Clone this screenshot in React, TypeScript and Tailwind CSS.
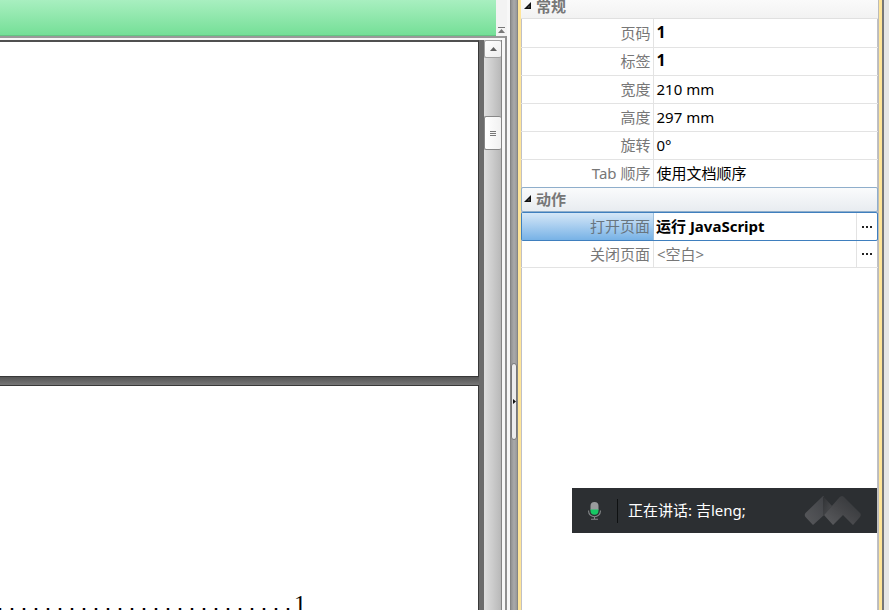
import { useState } from "react";

const latin = "font-['Noto_Sans','Noto_Sans_CJK_SC',sans-serif]";

type Property = { name: string; value: string; bold?: boolean };

const general: Property[] = [
  { name: "页码", value: "1", bold: true },
  { name: "标签", value: "1", bold: true },
  { name: "宽度", value: "210 mm" },
  { name: "高度", value: "297 mm" },
  { name: "旋转", value: "0°" },
  { name: "Tab 顺序", value: "使用文档顺序" },
];

function Expander() {
  return (
    <svg className="h-[7px] w-[7px] shrink-0" viewBox="0 0 7 7" aria-hidden="true">
      <path d="M7 0V7H0Z" fill="#111" />
      <path d="M5.5 3.5V5.5H3.5Z" fill="#666" />
    </svg>
  );
}

function Dots() {
  return (
    <svg className="h-[2px] w-[10px]" viewBox="0 0 10 2" aria-hidden="true">
      <path d="M0 0h2v2h-2zM4 0h2v2h-2zM8 0h2v2h-2z" fill="#222" />
    </svg>
  );
}

function GeneralTable() {
  return (
    <table className="w-full table-fixed border-collapse">
      <tbody>
        {general.map((item) => (
          <tr key={item.name} className="h-7 border-b border-[#e3e3e3] last:border-b-0">
            <th scope="row" className="w-[132px] border-r border-[#e3e3e3] p-0 pr-0.5 text-right font-normal text-[#777]">
              {item.name}
            </th>
            <td className={item.bold ? "p-0 pb-0.5 pl-[3px] text-base leading-5 font-bold" : "p-0 pl-[3px]"}>{item.value}</td>
          </tr>
        ))}
      </tbody>
    </table>
  );
}

function Actions() {
  return (
    <div>
      <div className="flex h-[29px] rounded-xs border border-[#3f7fbe]">
        <div className="flex w-[132px] shrink-0 items-center justify-end border-r border-[#9dbfdc] bg-linear-to-b from-[#d5e7f7] to-[#77b2e6] pr-[3px] pb-0.5 text-[#68757f]">
          打开页面
        </div>
        <div className="flex min-w-0 flex-1 items-center pb-0.5 pl-0.5 font-bold">运行 JavaScript</div>
        <button type="button" aria-label="编辑打开页面" className="flex w-[21px] items-center justify-center border-l border-[#e3e3e3]">
          <Dots />
        </button>
      </div>
      <div className="flex h-[27px] border-b border-[#e3e3e3] text-[#777]">
        <div className="flex w-[133px] shrink-0 items-center justify-end border-r border-[#e3e3e3] pr-[3px]">关闭页面</div>
        <div className="flex min-w-0 flex-1 items-center pl-[3px]">&lt;空白&gt;</div>
        <button type="button" aria-label="编辑关闭页面" className="flex w-[22px] items-center justify-center border-l border-[#e3e3e3] pr-0.5">
          <Dots />
        </button>
      </div>
    </div>
  );
}

function PropertyPanel() {
  const [showGeneral, setShowGeneral] = useState(true);
  const [showActions, setShowActions] = useState(true);
  return (
    <aside className={`${latin} w-[357px] shrink-0 bg-white text-[15px] leading-5 text-black shadow-[inset_1px_0_#c0c0c4,inset_-1px_0_#c0c0c4]`}>
      <button
        type="button"
        aria-expanded={showGeneral}
        onClick={() => setShowGeneral(!showGeneral)}
        className="flex h-[19px] w-full items-end gap-[5px] border-b border-[#e0e0e0] bg-linear-to-b from-[#fafafa] to-[#f2f2f2] pl-[3px] font-bold text-[#777]"
      >
        <span className="flex h-4 items-start">
          <Expander />
        </span>
        <span className="pb-0.5">常规</span>
      </button>
      {showGeneral && <GeneralTable />}
      <button
        type="button"
        aria-expanded={showActions}
        onClick={() => setShowActions(!showActions)}
        className="flex h-[25px] w-full items-center gap-[5px] rounded-xs border border-[#8faecb] bg-linear-to-b from-[#fafbfc] to-[#e8ecf0] pb-0.5 pl-0.5 font-bold text-[#777]"
      >
        <Expander />
        动作
      </button>
      {showActions && <Actions />}
    </aside>
  );
}

function Scrollbar() {
  return (
    <div className="flex w-[18px] shrink-0 flex-col border-r border-[#858585] bg-linear-to-r from-[#dedede] via-[#cccccc] to-[#b8b8b8]">
      <button type="button" aria-label="向上滚动" className="flex h-[18px] items-center justify-center rounded-xs border border-r-0 border-[#a0a0a0] bg-linear-to-br from-white to-[#ededed]">
        <svg className="h-1 w-[7px]" viewBox="0 0 7 4" aria-hidden="true"><path d="M3.5 0L7 4H0Z" fill="#606060" /></svg>
      </button>
      <div className="h-[58px]" />
      <button type="button" aria-label="滚动滑块" className="flex h-[34px] items-center justify-center rounded-xs border border-r-0 border-[#888] bg-linear-to-r from-white to-[#f1f1f1]">
        <svg className="h-[5px] w-1.5" viewBox="0 0 6 5" aria-hidden="true"><path d="M0 .5H6M0 2.5H6M0 4.5H6" stroke="#777" strokeWidth="1" /></svg>
      </button>
    </div>
  );
}

function DocumentView() {
  return (
    <main className="flex min-w-0 flex-1 flex-col border-r-2 border-[#909090]">
      <div className="flex h-9 shrink-0">
        <div className="flex-1 border-b border-[#64c483] bg-linear-to-b from-[#a8efc0] to-[#74df97]" />
        <button type="button" aria-label="收起工具栏" className="-mr-0.5 flex w-[11px] items-end justify-center bg-[#f3f3f3] pb-[3px]">
          <svg className="h-1.5 w-[7px]" viewBox="0 0 7 6" aria-hidden="true"><path d="M0 0H7V1H0ZM3.5 2L7 6H0Z" fill="#777" /></svg>
        </button>
      </div>
      <div className="h-1 shrink-0 border-t-2 border-[#999] bg-[#f8f8f8]" />
      <div className="flex min-h-0 flex-1 bg-[#f8f8f8] pr-[3px]">
        <div className="flex min-w-0 flex-1 flex-col overflow-hidden bg-[#6b6b6b] pr-[5px]">
          <section className="h-[337px] shrink-0 border-t-2 border-r border-b border-[#383838] border-t-[#505050] bg-white" />
          <div className="h-2 shrink-0 bg-linear-to-b from-[#555] to-[#777]" />
          <section className="flex-1 overflow-hidden border-t border-r border-[#383838] bg-white pt-[203px]">
            <p className="-ml-1.5 flex items-baseline leading-7 text-black">
              <span className="font-['Liberation_Mono',monospace] text-[20px]">.........................</span>
              <span className="font-['Liberation_Serif',serif] text-[24px]">1</span>
            </p>
          </section>
        </div>
        <Scrollbar />
      </div>
    </main>
  );
}

function Speaking() {
  return (
    <div role="status" className="absolute right-3 bottom-[77px] flex h-[45px] w-[305px] items-center bg-[#2c2f32] font-['Noto_Sans','Noto_Sans_CJK_SC',sans-serif] text-[15px] text-white">
      <svg className="ml-4 h-[18px] w-[13px]" viewBox="0 0 13 18" aria-hidden="true">
        <path d="M2.5 8V4a4 4 0 0 1 8 0v4Z" fill="#999b9d" />
        <path d="M2.5 7.5h8v1.2a4 4 0 0 1-8 0Z" fill="#16c964" />
        <path d="M.6 8.5v.8a5.9 5.4 0 0 0 11.8 0v-.8M6.5 15v2.3M3 17.2h7" fill="none" stroke="#85888a" strokeWidth="1.1" />
      </svg>
      <div className="ml-4 h-6 w-px bg-[#0f1112]" />
      <span className="ml-2.5">正在讲话: 吉leng;</span>
      <svg className="mr-[15px] ml-auto h-[30px] w-[58px]" viewBox="0 0 58 30" aria-hidden="true">
        <defs>
          <linearGradient id="leftPeak" x1="0" y1="1" x2="1" y2="0"><stop offset="0" stopColor="#58595c" /><stop offset="1" stopColor="#414347" /></linearGradient>
          <linearGradient id="rightPeak" x1="0" y1="1" x2="1" y2="0"><stop offset="0" stopColor="#5c5d60" /><stop offset=".5" stopColor="#454649" /><stop offset="1" stopColor="#303336" /></linearGradient>
          <linearGradient id="fold" x1="0" y1="0" x2="1" y2="1"><stop offset="0" stopColor="#303235" /><stop offset="1" stopColor="#4d4e51" /></linearGradient>
        </defs>
        <path d="M19 0L1.5 17q-1.5 2 0 4L9 29L20 19V0Z" fill="url(#leftPeak)" />
        <path d="M19 0L28 10L19 20Z" fill="url(#fold)" />
        <path d="M38 0Q36 0 34 3L20 19L29 29L39 19L49 29L56 21Q58 18 55 16L40 1Q39 0 38 0Z" fill="url(#rightPeak)" />
      </svg>
    </div>
  );
}

export default function App() {
  return (
    <div className="relative flex h-screen overflow-hidden bg-[#e6e6e6]">
      <DocumentView />
      <div className="w-[3px] shrink-0 bg-[#f8f8f8]" />
      <div className="flex w-2 shrink-0 items-center border-x border-[#858585] bg-linear-to-r from-[#929292] via-[#aaaaaa] to-[#999]">
        <button type="button" aria-label="折叠属性面板" className="mt-48 flex h-[77px] w-1.5 items-center justify-center rounded-sm border border-[#777] bg-[#ececec]">
          <svg className="h-[5px] w-[3px]" viewBox="0 0 3 5" aria-hidden="true"><path d="M0 0L3 2.5L0 5Z" fill="#111" /></svg>
        </button>
      </div>
      <div className="w-[3px] shrink-0 bg-[#ffe599]" />
      <PropertyPanel />
      <div className="w-1.5 shrink-0 border-r-2 border-l border-r-[#777] border-l-[#bbb] bg-[#ffe599]" />
      <div className="w-[5px] shrink-0 bg-[#e6e6e6]" />
      <Speaking />
    </div>
  );
}
